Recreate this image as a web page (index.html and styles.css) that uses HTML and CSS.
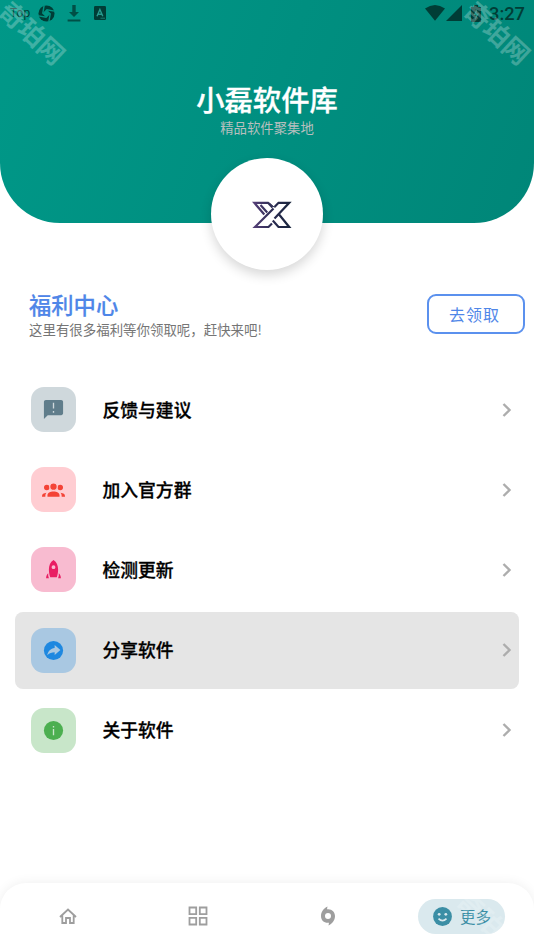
FILE: index.html
```html
<!DOCTYPE html>
<html lang="zh-CN">
<head>
<meta charset="utf-8">
<title>小磊软件库</title>
<link rel="stylesheet" href="styles.css">
</head>
<body>
<div class="app">
  <header class="hero">
    <div class="status">
      <div class="status-left">
        <span class="top">Top</span>
        <svg class="s-shutter" viewBox="0 0 18 18"><circle cx="9" cy="9" r="8.500" fill="#003d36"/><path d="M9 4.500L13.500 9 9 13.500 4.500 9Z" fill="#009584"/><path d="M5 9L6.500 .5M9 5L17.500 6.500M13 9L11.500 17.500M9 13L.5 11.500" fill="none" stroke="#009584" stroke-width="1.500"/></svg>
        <svg class="s-down" viewBox="0 0 14 18"><path d="M5.300 1h3.400v7h3.300L7 13 2 8h3.300zM.6 15.500h12.800v1.900H.6z" fill="#004f46"/></svg>
        <svg class="s-a" viewBox="0 0 12 14"><rect width="12" height="14" rx="1.200" fill="#003d36"/><path d="M3 10.300L5.900 3.500 8.800 10.300M4 8.200h3.800" fill="none" stroke="#279b8e" stroke-width="1.400"/><path d="M6.500 12.200h4.500" stroke="#279b8e" stroke-width=".7"/></svg>
      </div>
      <div class="status-right">
        <svg class="s-wifi" viewBox="0 0 20 16"><path d="M0 3.500Q10-3.500 20 3.500L10 15.800Z" fill="#003d36"/></svg>
        <svg class="s-signal" viewBox="0 0 16 16"><path d="M16 0V16H0Z" fill="#003d36"/></svg>
        <svg class="s-battery" viewBox="0 0 10 17"><path d="M3 0h4v2h3v15H0V2h3z" fill="#003d36"/><path d="M6 4L2.500 10H5L4 15 8 8.500H5.500Z" fill="#188b7e"/></svg>
        <span class="clock">3:27</span>
      </div>
    </div>
    <h1>小磊软件库</h1>
    <p>精品软件聚集地</p>
    <div class="logo">
      <svg viewBox="0 0 40 28"><defs><linearGradient id="lg" gradientUnits="userSpaceOnUse" x1="0" y1="0" x2="40" y2="0"><stop offset="0" stop-color="#58407a"/><stop offset=".5" stop-color="#2b2c52"/><stop offset="1" stop-color="#17243b"/></linearGradient></defs><g fill="none" stroke="url(#lg)" stroke-width="2.200"><path d="M12.300 13.500L2.300 1.800H16L20.500 6.500M8.500 4L15.200 11.500M21.500 7.500L3 26H16.500L20 22.500M22.500 6L26.500 1.800H37.200L22.500 17.500M27.300 13.800L37.200 26H26.500L20.800 19.500"/><path d="M17.500 2L22.500 6.500" stroke-width="1"/></g></svg>
    </div>
    <span class="mark mark-left">奇珀网</span>
    <span class="mark mark-right">奇珀网</span>
  </header>

  <section class="welfare">
    <div>
      <h2>福利中心</h2>
      <p>这里有很多福利等你领取呢，赶快来吧!</p>
    </div>
    <button>去领取</button>
  </section>

  <main class="list">
    <div class="row">
      <span class="tile slate"><svg viewBox="0 0 24 24"><path fill="currentColor" d="M20 2H4c-1.100 0-2 .9-2 2v18l4-4h14c1.100 0 2-.9 2-2V4c0-1.100-.9-2-2-2z"/><path d="M12 5v6M12 13.500v1.800" stroke="#cfd8dc" stroke-width="1.400"/></svg></span>
      <span class="label">反馈与建议</span><svg class="chev" viewBox="0 0 10 16"><path d="M1.500 2L7.500 8l-6 6"/></svg>
    </div>
    <div class="row">
      <span class="tile red"><svg viewBox="0 0 24 24"><g fill="currentColor"><circle cx="5" cy="10" r="2.900"/><circle cx="19" cy="10" r="2.900"/><circle cx="12" cy="9" r="3.900" stroke="#ffcdd2" stroke-width="1.200"/><path d="M5.700 19.500v-1.300c0-2.700 2.800-4 6.300-4s6.300 1.300 6.300 4v1.300zM0 19.500v-.5c0-2 1.600-3.200 4.700-3.500-.8.900-1.200 1.800-1.200 3v1zM24 19.500v-.5c0-2-1.600-3.200-4.700-3.500.8.900 1.200 1.800 1.200 3v1z"/></g></svg></span>
      <span class="label">加入官方群</span><svg class="chev" viewBox="0 0 10 16"><path d="M1.500 2L7.500 8l-6 6"/></svg>
    </div>
    <div class="row">
      <span class="tile pink"><svg viewBox="0 0 24 24"><path fill="currentColor" fill-rule="evenodd" d="M12 2C8.600 4 7.200 8 7.200 12c0 3.200.5 5.600 1.400 8h6.800c.9-2.400 1.400-4.800 1.400-8 0-4-1.400-8-4.800-10zm0 5.600a2 2 0 1 1 0 4 2 2 0 0 1 0-4zM6.500 16v2.500L7.200 21H4.300c0-2 .7-3.700 2.200-5zm11 0v2.500l-.7 2.500h2.900c0-2-.7-3.700-2.200-5z"/></svg></span>
      <span class="label">检测更新</span><svg class="chev" viewBox="0 0 10 16"><path d="M1.500 2L7.500 8l-6 6"/></svg>
    </div>
    <div class="row active">
      <span class="tile blue"><svg viewBox="0 0 24 24"><circle cx="12" cy="12" r="10" fill="currentColor"/><path d="M13.200 6.200l6 5.300-6 5.200v-2.900c-3 0-5.500.8-7.700 3.200.8-4.200 3.500-7 7.700-7.500z" fill="#a9c8e2"/></svg></span>
      <span class="label">分享软件</span><svg class="chev" viewBox="0 0 10 16"><path d="M1.500 2L7.500 8l-6 6"/></svg>
    </div>
    <div class="row">
      <span class="tile green"><svg viewBox="0 0 24 24"><circle cx="12" cy="12" r="10" fill="currentColor"/><path d="M12 7.200v1.600M12 10.500v6.500" stroke="#c8e6c9" stroke-width="1.400"/></svg></span>
      <span class="label">关于软件</span><svg class="chev" viewBox="0 0 10 16"><path d="M1.500 2L7.500 8l-6 6"/></svg>
    </div>
  </main>

  <nav class="tabs">
    <span class="tab"><svg class="home" viewBox="0 0 20 18"><path d="M2 10L10 2.500l8 7.500M4.300 8.500V16H8v-5h4v5h3.700V8.500" fill="none" stroke="#9e9e9e" stroke-width="1.800"/></svg></span>
    <span class="tab"><svg class="grid" viewBox="0 0 20 20"><path d="M1.500 1.500h6.700v6.700H1.500zM11.800 1.500h6.700v6.700h-6.700zM1.500 11.800h6.700v6.700H1.500zM11.800 11.800h6.700v6.700h-6.700z" fill="none" stroke="#9e9e9e" stroke-width="1.800"/></svg></span>
    <span class="tab"><svg class="swirl" viewBox="0 0 16 20"><path fill="#9e9e9e" fill-rule="evenodd" d="M7.500.5L7 3.200C11.800 2.600 15 5.700 15 10c0 4.200-2.500 7.300-6.500 9.500L9 16.800C4.200 17.400 1 14.300 1 10 1 5.800 3.500 2.700 7.500.5zM8 7a3 3 0 1 0 0 6 3 3 0 0 0 0-6z"/></svg></span>
    <span class="tab"><span class="pill"><svg viewBox="0 0 20 20"><circle cx="10" cy="10" r="9.900" fill="#3b8ea5"/><circle cx="6.500" cy="7.700" r="1.500" fill="#dae9ee"/><circle cx="13.500" cy="7.700" r="1.500" fill="#dae9ee"/><path d="M5.800 12.300q4.200 4.200 8.400 0" fill="none" stroke="#dae9ee" stroke-width="1.700"/></svg><span class="pill-text">更多</span><span class="mark mark-pill">奇珀网</span></span></span>
  </nav>
</div>
</body>
</html>
```
FILE: styles.css
```css
* { box-sizing: border-box; margin: 0; padding: 0; }
body { background: #fff; font-family: "Noto Sans CJK SC", sans-serif; }
svg { display: block; flex: none; }
.app { width: 534px; height: 950px; display: flex; flex-direction: column; overflow: hidden; }

.hero {
  position: relative; flex: none; height: 222.500px;
  display: flex; flex-direction: column; align-items: center;
  border-radius: 0 0 60px 60px;
  background: linear-gradient(110deg, #009888, #008678);
  color: #fff;
}
.status { width: 100%; height: 26px; padding: 0 9px 0 10px; display: flex; justify-content: space-between; align-items: center; color: #003d36; }
.status-left, .status-right { display: flex; align-items: center; }
.top { width: 28px; font: 12px/24px Roboto, sans-serif; }
.s-shutter { width: 17px; height: 17px; }
.s-down { width: 14px; height: 18px; margin-left: 12px; }
.s-a { width: 12px; height: 14px; margin-left: 13px; }
.s-wifi { width: 20px; height: 16px; }
.s-signal { width: 16px; height: 16px; margin-left: 1px; }
.s-battery { width: 10px; height: 17px; margin-left: 9px; }
.clock { margin-left: 8px; font: 500 18.300px/27px Roboto, sans-serif; }
.hero h1 { margin-top: 53px; font-size: 28.300px; line-height: 40px; font-weight: 500; -webkit-text-stroke: .3px #fff; }
.hero p { margin-top: -1px; font-size: 13.400px; line-height: 18px; color: #b7bfbe; }
.logo {
  flex: none; width: 112px; height: 112px; margin-top: 21.500px; padding: 2px 0 0 10px;
  border-radius: 50%; background: #fff;
  display: flex; align-items: center; justify-content: center;
  box-shadow: 0 5px 12px rgba(0, 0, 0, .16);
}
.logo svg { width: 40px; height: 28px; }
.mark { position: absolute; font-size: 26px; line-height: 30px; font-weight: 700; white-space: nowrap; color: rgba(255, 255, 255, .25); transform: rotate(43deg); }
.mark-left { left: -6px; top: 17px; }
.mark-right { left: 459px; top: 17px; }

.welfare { flex: none; height: 56px; margin: 66px 9px 0 29px; display: flex; justify-content: space-between; align-items: flex-start; }
.welfare h2 { font-size: 22.300px; line-height: 30px; font-weight: 500; color: #4f86e8; -webkit-text-stroke: .2px #4f86e8; }
.welfare p { font-size: 13.450px; line-height: 20px; color: #757575; }
.welfare button { width: 98px; height: 40px; margin-top: 5px; padding-right: 3px; border: 2px solid #5b91ee; border-radius: 9px; background: #fff; color: #4f86e8; font: 16px/34px "Noto Sans CJK SC", sans-serif; letter-spacing: 1px; }

.list { flex: none; padding: 26.500px 15px 0; display: flex; flex-direction: column; gap: 3.200px; }
.row { height: 77px; padding: 0 7px 0 16px; display: flex; align-items: center; border-radius: 8px; }
.row.active { background: #e5e5e5; }
.tile { width: 45px; height: 45px; border-radius: 13px; display: flex; align-items: center; justify-content: center; }
.tile svg { width: 23px; height: 23px; }
.slate { background: #cfd8dc; color: #607d8b; }
.red { background: #ffcdd2; color: #f44336; }
.pink { background: #f8bbd0; color: #e91e63; }
.blue { background: #a9c8e2; color: #1e88e0; }
.green { background: #c8e6c9; color: #4caf50; }
.label { flex: 1; margin: -2px 0 0 26.500px; font-size: 17.800px; line-height: 26px; font-weight: 500; color: #000; -webkit-text-stroke: .3px #000; }
.chev { width: 10px; height: 16px; fill: none; stroke: #adadad; stroke-width: 2.400; }

.tabs { flex: none; height: 67px; margin-top: auto; padding-left: 3px; display: grid; grid-template-columns: repeat(3, 130px) 1fr; border-radius: 26px 26px 0 0; background: #fff; box-shadow: 0 0 12px rgba(0, 0, 0, .07); }
.tab { display: flex; align-items: center; justify-content: center; padding-bottom: 1px; }
.tab:last-child { justify-content: flex-start; padding-left: 25px; padding-bottom: 0; }
.home { width: 20px; height: 18px; }
.grid { width: 20px; height: 20px; }
.swirl { width: 16px; height: 20px; }
.pill { position: relative; width: 87px; height: 35px; border-radius: 18px; background: #dae9ee; display: flex; align-items: center; padding-left: 15px; gap: 8px; overflow: hidden; font-size: 15.500px; color: #3b8ea5; }
.pill-text { margin-top: -2px; }
.pill svg { width: 19px; height: 19px; }
.mark-pill { left: 34px; top: 8px; color: rgba(255, 255, 255, .2); }
```
